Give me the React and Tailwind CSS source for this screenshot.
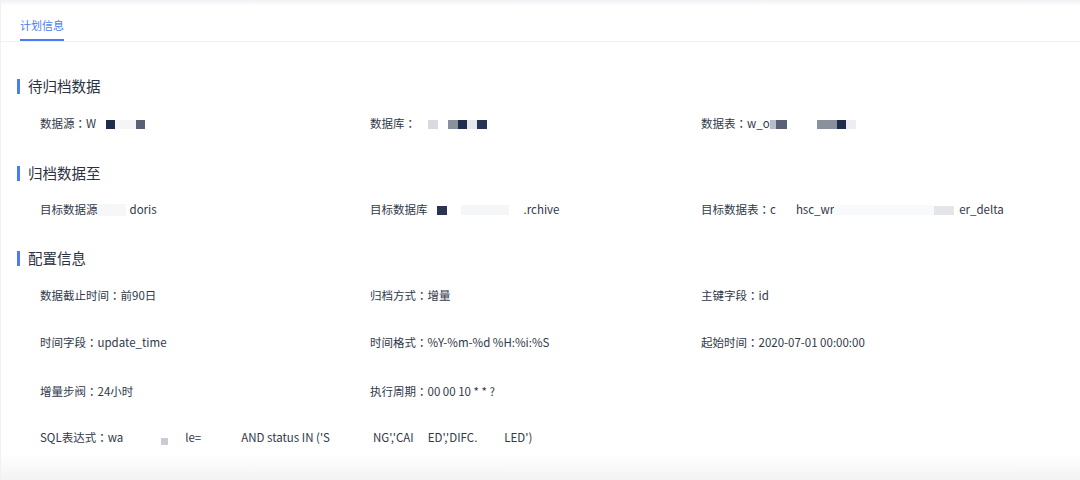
import React from 'react';

const blk = (w, c) => <span className={`inline-block h-[9px] align-middle ${w} ${c}`} />;

// centered full-width colon, as PingFang draws it
const C = () => <span className="font-['Noto_Sans_CJK_TC',sans-serif]">：</span>;

function Section({ title, children }) {
  return (
    <div className="flex flex-col">
      <div className="flex items-center h-[20px] pl-[17px]">
        <span className="w-[3px] h-[15px] bg-[#4a7cf6] mr-[8px]" />
        <span className="text-[14.5px] text-[#2b3142]">{title}</span>
      </div>
      {children}
    </div>
  );
}

function Row({ items, className }) {
  return (
    <div className={`grid grid-cols-[330px_331px_1fr] pl-[40px] h-[20px] items-center ${className}`}>
      {items.map((it, i) => (
        <div key={i} className="flex items-center whitespace-nowrap">{it}</div>
      ))}
    </div>
  );
}

const kv = (k, v) => <>{k}<C />{v}</>;

export default function App() {
  return (
    <div className="w-[1080px] h-[480px] bg-white overflow-hidden relative text-[11.5px] text-[#313849] font-['Noto_Sans_CJK_SC','Liberation_Sans',sans-serif]">
      <div className="h-[6px] bg-gradient-to-b from-[#f1f2f4] to-white" />
      <div className="border-b border-[#eef0f4] pl-[20px]">
        <div className="inline-block pt-[11px] pb-[6px] border-b-2 border-[#4a7cf6] text-[11px] text-[#4a7cf6] leading-[16px]">
          计划信息
        </div>
      </div>

      <div className="pt-[34px] flex flex-col">
        <Section title="待归档数据">
          <Row
            className="mt-[18px]"
            items={[
              <>数据源<C />W<span className="ml-[10px] inline-flex bg-[#f4f5f7]">{blk('w-[9px]', 'bg-[#1f2c4a]')}<span className="w-[21px]" />{blk('w-[9px]', 'bg-[#5a6176]')}</span></>,
              <>数据库<C /><span className="ml-[12px] inline-flex items-center">{blk('w-[10px]', 'bg-[#d8dae0]')}<span className="w-[10px]" />{blk('w-[10px]', 'bg-[#8b909d]')}{blk('w-[9px]', 'bg-[#1f2c4a]')}{blk('w-[10px]', 'bg-[#e6e8ec]')}{blk('w-[10px]', 'bg-[#2a3553]')}</span></>,
              <>数据表<C />w_o<span className="inline-flex items-center">{blk('w-[6px]', 'bg-[#b9bcc6]')}{blk('w-[11px]', 'bg-[#5a6176]')}<span className="w-[30px]" />{blk('w-[20px]', 'bg-[#8b909d]')}{blk('w-[9px]', 'bg-[#1f2c4a]')}{blk('w-[10px]', 'bg-[#eceef1]')}</span></>,
            ]}
          />
        </Section>

        <div className="mt-[29px]">
          <Section title="归档数据至">
            <Row
              className="mt-[17px]"
              items={[
                <>目标数据源<span className="w-[28px] h-[12px] bg-[#f6f7f9] inline-block" /><span className="w-[4px]" />doris</>,
                <>目标数据库<span className="ml-[9px] inline-flex items-center">{blk('w-[10px]', 'bg-[#2a3553]')}<span className="w-[14px]" /><span className="inline-block w-[48px] h-[10px] bg-[#f5f6f8]" /><span className="w-[15px]" /></span>.rchive</>,
                <>目标数据表<C />c<span className="w-[20px]" />hsc_wr<span className="w-[100px] h-[10px] bg-[#f8f9fa] inline-block" />{blk('w-[20px]', 'bg-[#e3e5e9]')}<span className="w-[5px]" />er_delta</>,
              ]}
            />
          </Section>
        </div>

        <div className="mt-[28px]">
          <Section title="配置信息">
            <Row className="mt-[18px]" items={[kv('数据截止时间', '前90日'), kv('归档方式', '增量'), kv('主键字段', 'id')]} />
            <Row className="mt-[27px]" items={[kv('时间字段', 'update_time'), kv('时间格式', '%Y-%m-%d %H:%i:%S'), kv('起始时间', '2020-07-01 00:00:00')]} />
            <Row className="mt-[29px]" items={[kv('增量步阀', '24小时'), kv('执行周期', '00 00 10 * * ?'), '']} />
            <div className="pl-[40px] mt-[26px] h-[20px] flex items-center whitespace-nowrap">
              SQL表达式<C />wa
              <span className="w-[38px]" />
              <span className="inline-block w-[7px] h-[7px] bg-[#c9ccd3] mt-[6px]" />
              <span className="w-[17px]" />
              le=
              <span className="w-[40px]" />
              AND status IN ('S
              <span className="w-[43px]" />
              NG','CAI
              <span className="w-[14px]" />
              ED','DIFC.
              <span className="w-[27px]" />
              LED')
            </div>
          </Section>
        </div>
      </div>

      <div className="absolute left-0 right-0 bottom-0 h-[26px] bg-gradient-to-b from-white to-[#f3f3f4]" />
      <div className="absolute left-0 top-0 bottom-0 w-px bg-[#f0f1f3]" />
    </div>
  );
}
